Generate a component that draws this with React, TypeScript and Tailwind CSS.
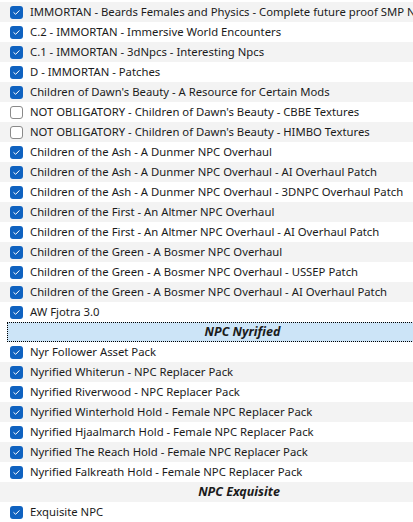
type Row = { kind: 'item'; label: string; checked: boolean } | { kind: 'header'; label: string; selected?: boolean };

const rows: Row[] = [
  { kind: 'item', label: 'IMMORTAN - Beards Females and Physics - Complete future proof SMP NPC', checked: true },
  { kind: 'item', label: 'C.2 - IMMORTAN - Immersive World Encounters', checked: true },
  { kind: 'item', label: 'C.1 - IMMORTAN - 3dNpcs - Interesting Npcs', checked: true },
  { kind: 'item', label: 'D - IMMORTAN - Patches', checked: true },
  { kind: 'item', label: "Children of Dawn's Beauty - A Resource for Certain Mods", checked: true },
  { kind: 'item', label: "NOT OBLIGATORY - Children of Dawn's Beauty - CBBE Textures", checked: false },
  { kind: 'item', label: "NOT OBLIGATORY - Children of Dawn's Beauty - HIMBO Textures", checked: false },
  { kind: 'item', label: 'Children of the Ash - A Dunmer NPC Overhaul', checked: true },
  { kind: 'item', label: 'Children of the Ash - A Dunmer NPC Overhaul - AI Overhaul Patch', checked: true },
  { kind: 'item', label: 'Children of the Ash - A Dunmer NPC Overhaul - 3DNPC Overhaul Patch', checked: true },
  { kind: 'item', label: 'Children of the First - An Altmer NPC Overhaul', checked: true },
  { kind: 'item', label: 'Children of the First - An Altmer NPC Overhaul - AI Overhaul Patch', checked: true },
  { kind: 'item', label: 'Children of the Green - A Bosmer NPC Overhaul', checked: true },
  { kind: 'item', label: 'Children of the Green - A Bosmer NPC Overhaul - USSEP Patch', checked: true },
  { kind: 'item', label: 'Children of the Green - A Bosmer NPC Overhaul - AI Overhaul Patch', checked: true },
  { kind: 'item', label: 'AW Fjotra 3.0', checked: true },
  { kind: 'header', label: 'NPC Nyrified', selected: true },
  { kind: 'item', label: 'Nyr Follower Asset Pack', checked: true },
  { kind: 'item', label: 'Nyrified Whiterun - NPC Replacer Pack', checked: true },
  { kind: 'item', label: 'Nyrified Riverwood - NPC Replacer Pack', checked: true },
  { kind: 'item', label: 'Nyrified Winterhold Hold - Female NPC Replacer Pack', checked: true },
  { kind: 'item', label: 'Nyrified Hjaalmarch Hold - Female NPC Replacer Pack', checked: true },
  { kind: 'item', label: 'Nyrified The Reach Hold - Female NPC Replacer Pack', checked: true },
  { kind: 'item', label: 'Nyrified Falkreath Hold - Female NPC Replacer Pack', checked: true },
  { kind: 'header', label: 'NPC Exquisite' },
  { kind: 'item', label: 'Exquisite NPC', checked: true },
];

function Check({ checked }: { checked: boolean }) {
  if (!checked) {
    return <span className="block h-[13px] w-[13px] shrink-0 rounded-[3px] border border-[#8a8a8a] bg-white" />;
  }
  return (
    <span className="flex h-[13px] w-[13px] shrink-0 items-center justify-center rounded-[3px] bg-[#0f62c0]">
      <svg width="9" height="9" viewBox="0 0 9 9" fill="none">
        <path d="M1.8 4.6 L3.6 6.3 L7.2 2.7" stroke="white" strokeWidth="1" strokeLinecap="round" strokeLinejoin="round" />
      </svg>
    </span>
  );
}

export default function App() {
  return (
    <div className="h-[522px] w-[413px] overflow-hidden bg-white pt-[2px] font-['Noto_Sans',sans-serif] text-[11.3px] text-[#1b1b1b]">
      <div className="w-[478px]">
        {rows.map((r, i) => {
          const stripe = i % 2 === 0 ? 'bg-[#f3f3f3]' : 'bg-white';
          if (r.kind === 'header') {
            return r.selected ? (
              <div key={i} className="flex h-5 pl-[7px]">
                <div className="flex flex-1 items-center justify-center border border-dotted border-black bg-[#cce4f7] text-[12.5px] font-bold italic">
                  {r.label}
                </div>
              </div>
            ) : (
              <div key={i} className={`flex h-5 items-center justify-center text-[12.5px] font-bold italic ${stripe}`}>
                {r.label}
              </div>
            );
          }
          return (
            <div key={i} className={`flex h-5 items-center gap-[7px] whitespace-nowrap pl-[10px] ${stripe}`}>
              <Check checked={r.checked} />
              <span>{r.label}</span>
            </div>
          );
        })}
      </div>
    </div>
  );
}
